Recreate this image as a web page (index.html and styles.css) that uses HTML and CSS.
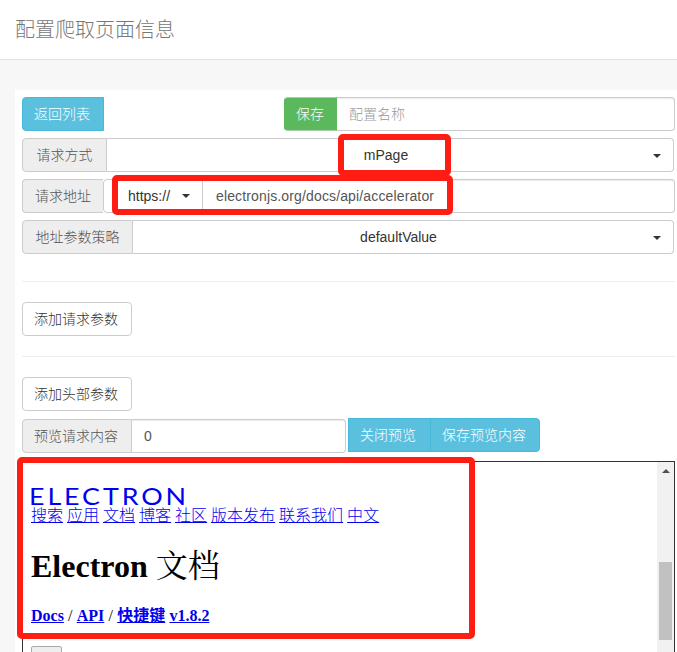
FILE: index.html
```html
<!DOCTYPE html>
<html lang="zh-CN">
<head>
<meta charset="utf-8">
<title>配置爬取页面信息</title>
<link rel="stylesheet" href="styles.css">
</head>
<body>
<header class="page-head"><h1>配置爬取页面信息</h1></header>
<main class="panel">
  <div class="row top-row">
    <button class="btn info back">返回列表</button>
    <div class="group name-group">
      <button class="btn success">保存</button>
      <div class="field placeholder">配置名称</div>
    </div>
  </div>
  <div class="row select-row">
    <span class="addon method">请求方式</span>
    <div class="select">mPage<i class="caret"></i></div>
    <div class="mark mark-method"></div>
  </div>
  <div class="row">
    <span class="addon address">请求地址</span>
    <div class="protocol">https://<i class="caret"></i></div>
    <div class="field url">electronjs.org/docs/api/accelerator</div>
    <div class="mark mark-url"></div>
  </div>
  <div class="row select-row">
    <span class="addon strategy">地址参数策略</span>
    <div class="select">defaultValue<i class="caret"></i></div>
  </div>
  <hr class="first-rule">
  <button class="btn default">添加请求参数</button>
  <hr>
  <button class="btn default">添加头部参数</button>
  <div class="preview-row">
    <div class="group preview-input">
      <span class="addon preview-label">预览请求内容</span>
      <div class="field">0</div>
    </div>
    <div class="group preview-actions">
      <button class="btn info">关闭预览</button>
      <button class="btn info">保存预览内容</button>
    </div>
  </div>
  <section class="preview">
    <div class="document">
      <a class="logo"><svg width="158" height="20" viewBox="0 0 158 20"><text x="-2" y="19" textLength="160" lengthAdjust="spacingAndGlyphs">ELECTRON</text></svg></a>
      <nav><a>搜索</a> <a>应用</a> <a>文档</a> <a>博客</a> <a>社区</a> <a>版本发布</a> <a>联系我们</a> <a>中文</a></nav>
      <h2>Electron <span>文档</span></h2>
      <div class="crumbs"><a>Docs</a> / <a>API</a> / <a>快捷键</a> <a>v1.8.2</a></div>
      <div class="doc-button"></div>
    </div>
    <div class="scrollbar"><i class="arrow"></i><div class="thumb"></div></div>
    <div class="mark mark-preview"></div>
  </section>
</main>
</body>
</html>
```
FILE: styles.css
```css
* { box-sizing: border-box; }
html, body { height: 100%; }
body {
  margin: 0;
  overflow: hidden;
  background: #f7f7f7;
  color: #333;
  font: 300 14px/20px "Liberation Sans", "Noto Sans CJK SC", sans-serif;
}
.page-head {
  height: 60px;
  padding: 17px 15px 0;
  background: #fff;
  border-bottom: 1px solid #e1e1e1;
}
.page-head h1 {
  margin: 0;
  color: #777;
  font-size: 20px;
  line-height: 26px;
  font-weight: 300;
}
.panel {
  height: 562px;
  margin: 30px 0 0 15px;
  padding: 7px 2px 0 7px;
  background: #fff;
}
.row {
  position: relative;
  display: flex;
  height: 34px;
  margin-bottom: 7px;
}
.select-row { padding-right: 1px; }
.group { display: flex; height: 34px; }
.btn {
  display: block;
  height: 34px;
  padding: 0 12px 0 11px;
  border: 1px solid #ccc;
  border-radius: 4px;
  background: #fff;
  color: #333;
  font: inherit;
  line-height: 32px;
  text-align: left;
  white-space: nowrap;
}
.default { width: 110px; }
.info { background: #5bc0de; border-color: #46b8da; color: #fff; }
.success { width: 53px; background: #5cb85c; border-color: #a9cfa9 #5cb85c; border-radius: 4px 0 0 4px; color: #fff; }
.back { width: 82px; border-radius: 4px 0 0 4px; }
.top-row { justify-content: space-between; }
.name-group { width: 391px; }
.field {
  flex: 1;
  padding: 0 12px;
  border: 1px solid #ccc;
  border-left: 0;
  border-radius: 0 4px 4px 0;
  box-shadow: inset 0 1px 1px rgba(0, 0, 0, .075);
  color: #555;
  line-height: 32px;
}
.placeholder { color: #999; }
.url { padding-left: 13px; letter-spacing: .14px; }
.addon {
  flex: none;
  width: 110px;
  border: 1px solid #ccc;
  border-radius: 4px 0 0 4px;
  background: #eee;
  color: #555;
  line-height: 32px;
  text-align: center;
}
.method { width: 85px; }
.address { width: 81px; border-right: 0; }
.strategy { width: 111px; }
.preview-label { padding-right: 2px; }
.select {
  position: relative;
  flex: 1;
  border: 1px solid #ccc;
  border-left: 0;
  border-radius: 0 4px 4px 0;
  line-height: 32px;
  text-align: center;
}
.method + .select { padding-right: 8px; }
.strategy + .select { padding-right: 9px; }
.caret {
  display: inline-block;
  border-top: 4px solid #333;
  border-left: 4px solid transparent;
  border-right: 4px solid transparent;
}
.select .caret { position: absolute; top: 15px; right: 12px; }
.protocol {
  display: flex;
  align-items: center;
  justify-content: space-between;
  width: 100px;
  padding: 0 12px 0 24px;
  border: 1px solid #ccc;
  border-radius: 4px 0 0 4px;
}
.mark {
  position: absolute;
  z-index: 2;
  border: 6px solid #ff1c13;
  border-radius: 5px;
}
.mark-method { left: 316px; top: -4px; width: 113px; height: 42px; }
.mark-url { left: 90px; top: -4px; width: 341px; height: 40px; }
.mark-preview { left: -6px; top: -5px; width: 458px; height: 182px; }
hr { height: 1px; margin: 20px 0; border: 0; background: #eee; }
.first-rule { margin-top: 27px; }
.preview-row { display: flex; gap: 2px; margin-top: 7px; }
.preview-input { width: 324px; margin-top: 1px; }
.preview-actions .btn { border-radius: 0; }
.preview-actions .btn:first-child { width: 83px; }
.preview-actions .btn:last-child { width: 110px; margin-left: -1px; border-radius: 0 4px 4px 0; }
.preview {
  position: relative;
  display: flex;
  height: 200px;
  margin-top: 8px;
  border: 1px solid #333;
}
.document {
  flex: 1;
  padding: 24px 8px 0;
  color: #000;
  font: 400 16px/20px "Liberation Serif", "Noto Sans CJK SC", serif;
}
.document a { color: #00e; text-decoration: underline; }
.logo { display: block; height: 20px; }
.logo svg { display: block; overflow: visible; }
.logo text { fill: #00e; font: 400 23px Lato, sans-serif; letter-spacing: 2.5px; }
nav { height: 20px; font-weight: 300; white-space: nowrap; }
.document h2 { margin: 17px 0 20px; font-size: 32px; line-height: 40px; }
.document h2 span { font-family: "Noto Serif CJK SC", "Noto Sans CJK SC", serif; font-weight: 400; }
.crumbs { height: 20px; word-spacing: .2px; }
.crumbs a { font-weight: 700; }
.doc-button { width: 31px; height: 24px; margin-top: 20px; border: 1px solid #aaa; border-radius: 2px; background: #eee; }
.scrollbar { width: 17px; padding: 7px 2px 0; background: #f1f1f1; }
.arrow { display: block; width: 8px; margin-left: 3px; border: 4px solid transparent; border-top: 0; border-bottom-color: #505050; }
.thumb { height: 78px; margin-top: 89px; background: #c1c1c1; }
```
